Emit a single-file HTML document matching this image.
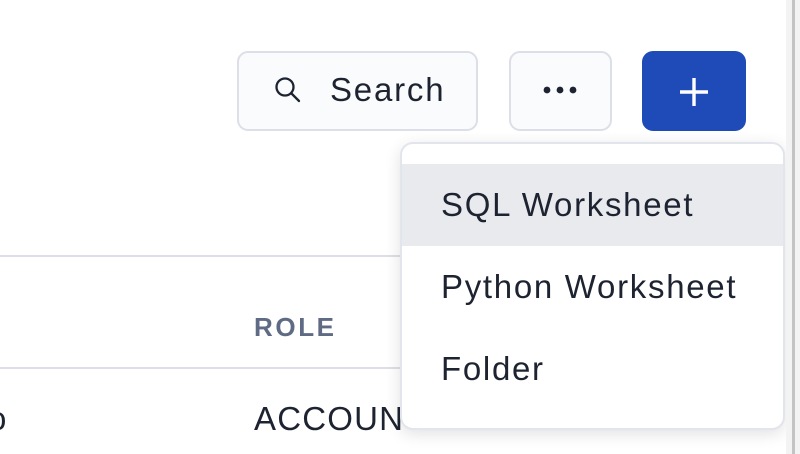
<!DOCTYPE html>
<html><head><style>
*{margin:0;padding:0;box-sizing:border-box}
body{width:800px;height:454px;overflow:hidden;background:#fff;font-family:"Liberation Sans",sans-serif;color:#1e2331;position:relative}
.abs{position:absolute}
.btn{position:absolute;border:2px solid #dcdfe7;border-radius:11px;background:#fafbfc}
.line{position:absolute;left:0;width:420px;height:2px;background:#dcdfe9}
.menu{position:absolute;left:400px;top:142px;width:385px;height:288px;background:#fff;border:2px solid #e2e5ec;border-radius:13px;box-shadow:0 4px 16px rgba(0,0,0,.12);overflow:hidden}
.item{position:absolute;left:0;width:100%;height:82px;font-size:33px;letter-spacing:1.7px;padding-left:39px;line-height:82px}
</style></head><body>
<div class="btn" style="left:237px;top:51px;width:241px;height:80px"></div>
<svg class="abs" style="left:272px;top:74px" width="32" height="32" viewBox="0 0 32 32"><circle cx="13" cy="13" r="8.5" fill="none" stroke="#1e2331" stroke-width="2.3"/><path d="M19.5 19.5L27 27" stroke="#1e2331" stroke-width="2.3" stroke-linecap="round"/></svg>
<div class="abs" style="left:330px;top:70px;font-size:33px;letter-spacing:1.8px;line-height:40px">Search</div>
<div class="btn" style="left:509px;top:51px;width:103px;height:80px"></div>
<svg class="abs" style="left:540px;top:82px" width="40" height="16"><circle cx="7" cy="8" r="3.4" fill="#1e2331"/><circle cx="20" cy="8" r="3.4" fill="#1e2331"/><circle cx="33" cy="8" r="3.4" fill="#1e2331"/></svg>
<div class="abs" style="left:642px;top:51px;width:104px;height:80px;background:#1f4bb8;border-radius:11px"></div>
<svg class="abs" style="left:676px;top:74px" width="36" height="36"><path d="M18 4V32M4 18H32" stroke="#fff" stroke-width="3.4"/></svg>
<div class="line" style="top:255px"></div>
<div class="line" style="top:367px"></div>
<div class="abs" style="left:254px;top:312px;font-size:26px;font-weight:bold;color:#5f6b85;letter-spacing:2.6px">ROLE</div>
<div class="abs" style="left:254px;top:400px;font-size:33px;letter-spacing:1.2px">ACCOUNTADMIN</div>
<div class="abs" style="left:-12px;top:400px;font-size:33px">o</div>
<div class="menu">
<div class="item" style="top:20px;background:#e9eaee">SQL Worksheet</div>
<div class="item" style="top:102px">Python Worksheet</div>
<div class="item" style="top:184px">Folder</div>
</div>
<div class="abs" style="left:786px;top:0;width:14px;height:454px;background:#f3f3f3"></div>
<div class="abs" style="left:792px;top:0;width:3px;height:454px;background:#c4c4c4"></div>
</body></html>
